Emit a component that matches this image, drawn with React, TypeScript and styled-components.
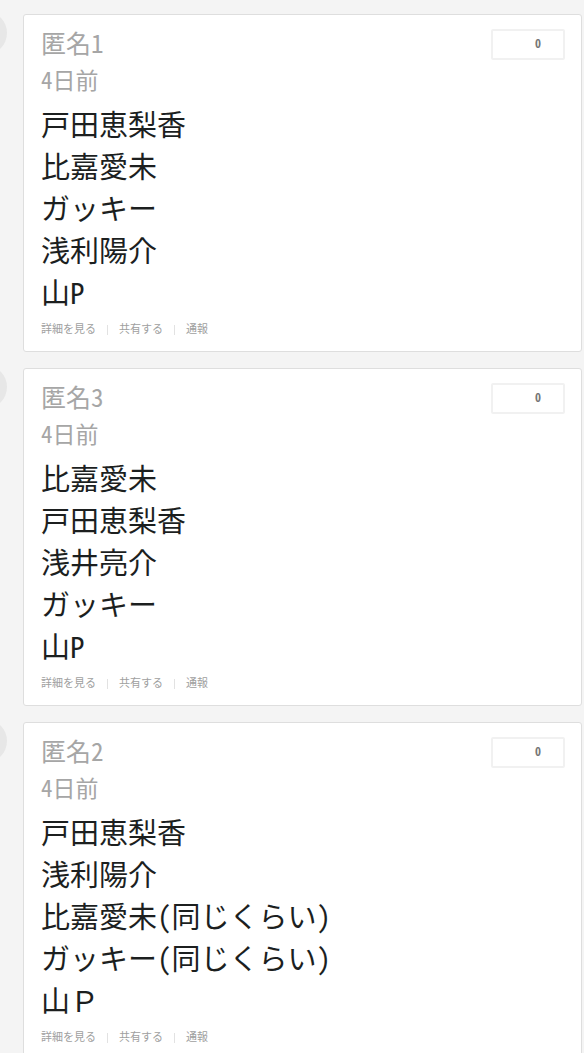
import React from "react";
import styled, { createGlobalStyle } from "styled-components";

const GlobalStyle = createGlobalStyle`
  *, *::before, *::after { box-sizing: border-box; }
  body {
    margin: 0;
    background: #f4f4f4;
    color: #1c1f1f;
    font-family: "Noto Sans CJK JP", sans-serif;
    font-feature-settings: "hwid";
    overflow-x: hidden;
    scrollbar-width: none;
  }
`;

const Feed = styled.main`
  display: flex;
  flex-direction: column;
  gap: 16px;
  padding: 14px 2px 0 0;
  overflow-x: hidden;
`;

const CommentRow = styled.div`
  display: flex;
  align-items: flex-start;
  gap: 16px;
`;

const Avatar = styled.div`
  flex: none;
  width: 44px;
  height: 44px;
  margin: -3px 0 0 -37px;
  border-radius: 50%;
  background: #e7e7e7;
`;

const Card = styled.article`
  flex: 1;
  min-width: 0;
  padding: 10px 16px 13px 17px;
  background: #fff;
  border: 1px solid #dedede;
  border-radius: 3px;
`;

const Header = styled.header`
  display: flex;
  justify-content: space-between;
  align-items: flex-start;
  height: 35px;
`;

const Name = styled.h2`
  margin: 0;
  font-size: 25px;
  line-height: 35px;
  font-weight: 400;
  color: #a6a6a6;
`;

const Posted = styled.time`
  display: block;
  font-size: 23px;
  line-height: 38px;
  color: #a6a6a6;
`;

const VoteButton = styled.button`
  width: 74px;
  height: 31px;
  margin-top: 4px;
  padding: 0 0 3px 20px;
  background: #fff;
  border: 2px solid #f1f1f1;
  border-radius: 2px;
  font: inherit;
  font-feature-settings: inherit;
  font-size: 12px;
  line-height: 16px;
  font-weight: 700;
  color: #777;
`;

const Body = styled.p`
  margin: 4px 0 6px;
  font-size: 29px;
  line-height: 42px;
`;

const Line = styled.span<{ $fullWidth: boolean }>`
  display: block;
  font-feature-settings: ${(p) => (p.$fullWidth ? "normal" : "inherit")};
`;

const Actions = styled.nav`
  display: flex;
  align-items: center;
  height: 20px;
`;

const ActionLink = styled.a`
  font-size: 11px;
  line-height: 20px;
  color: #a0a0a0;
  text-decoration: none;

  & + &::before {
    content: "";
    display: inline-block;
    width: 1px;
    height: 10px;
    margin: 0 11px;
    background: #e2e2e2;
    vertical-align: middle;
  }
`;

type Comment = { name: string; posted: string; votes: number; lines: string[] };

const comments: Comment[] = [
  {
    name: "匿名1",
    posted: "4日前",
    votes: 0,
    lines: ["戸田恵梨香", "比嘉愛未", "ガッキー", "浅利陽介", "山P"],
  },
  {
    name: "匿名3",
    posted: "4日前",
    votes: 0,
    lines: ["比嘉愛未", "戸田恵梨香", "浅井亮介", "ガッキー", "山P"],
  },
  {
    name: "匿名2",
    posted: "4日前",
    votes: 0,
    lines: ["戸田恵梨香", "浅利陽介", "比嘉愛未(同じくらい)", "ガッキー(同じくらい)", "山Ｐ"],
  },
];

// Full-width Latin letters keep their wide form.
const hasFullWidthLatin = (text: string) => /[\uff21-\uff3a\uff41-\uff5a]/.test(text);

export default function App() {
  return (
    <>
      <GlobalStyle />
      <Feed lang="ja">
        {comments.map((comment) => (
          <CommentRow key={comment.name}>
            <Avatar />
            <Card>
              <Header>
                <Name>{comment.name}</Name>
                <VoteButton type="button">{comment.votes}</VoteButton>
              </Header>
              <Posted>{comment.posted}</Posted>
              <Body>
                {comment.lines.map((line) => (
                  <Line key={line} $fullWidth={hasFullWidthLatin(line)}>
                    {line}
                  </Line>
                ))}
              </Body>
              <Actions>
                <ActionLink href="#detail">詳細を見る</ActionLink>
                <ActionLink href="#share">共有する</ActionLink>
                <ActionLink href="#report">通報</ActionLink>
              </Actions>
            </Card>
          </CommentRow>
        ))}
      </Feed>
    </>
  );
}
